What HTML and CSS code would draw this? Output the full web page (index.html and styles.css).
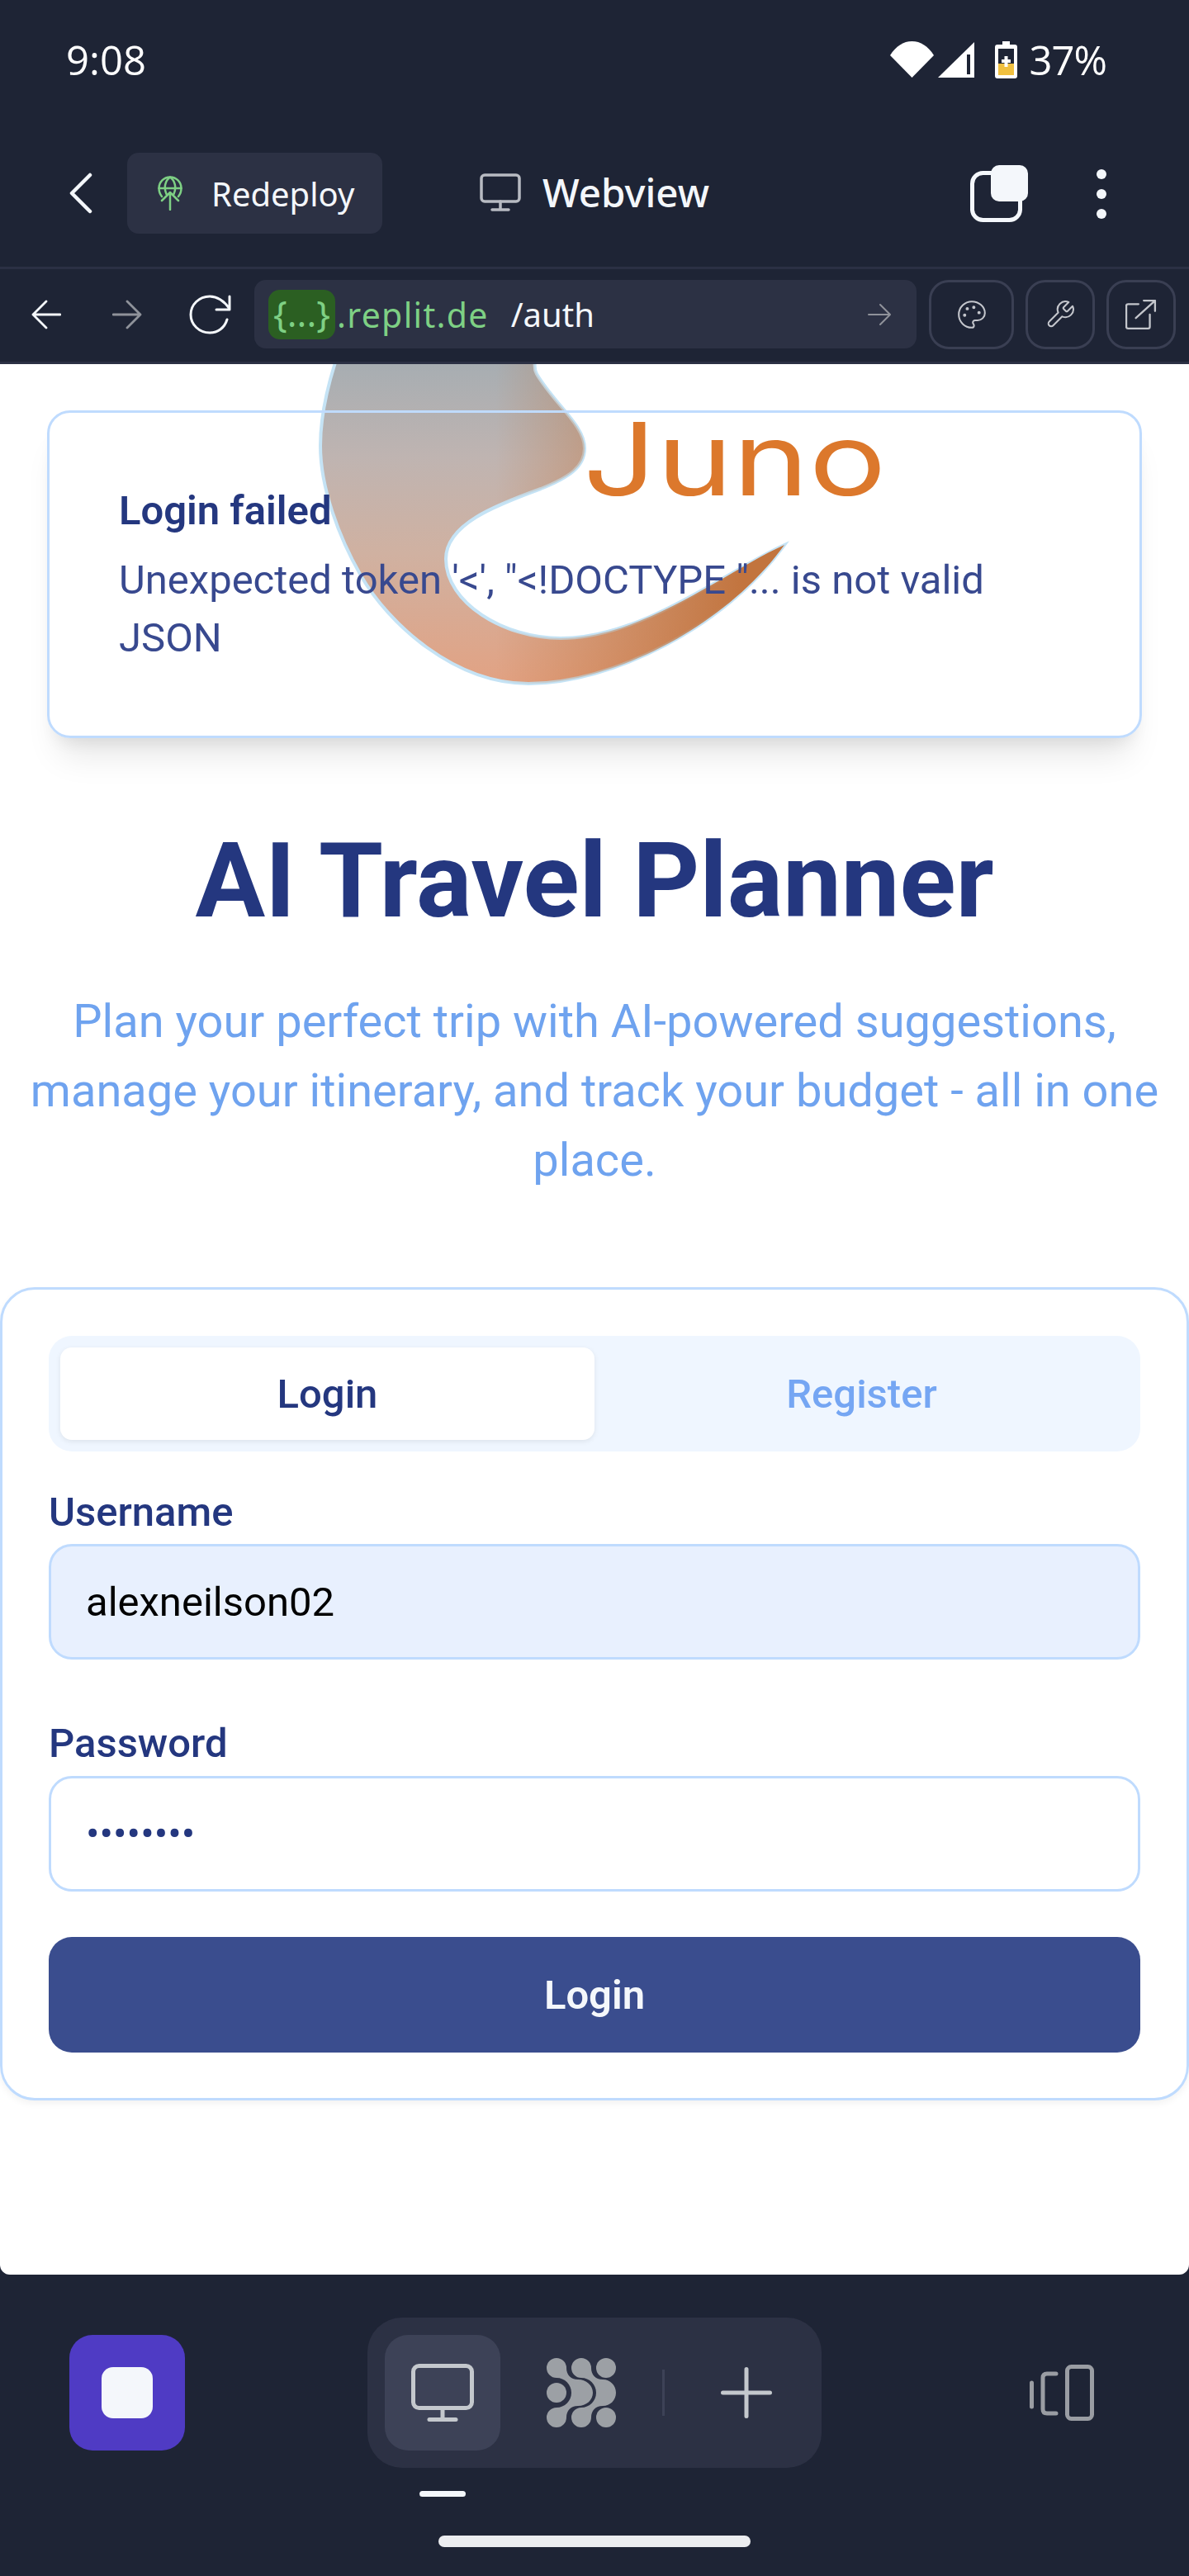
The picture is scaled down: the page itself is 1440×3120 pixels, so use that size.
FILE: index.html
```html
<!DOCTYPE html>
<html lang="en">
<head>
    <meta charset="UTF-8">
    <meta name="viewport" content="width=device-width, initial-scale=1.0">
    <title>AI Travel Planner</title>
    <link rel="stylesheet" href="styles.css">
</head>
<body>
    <!-- Status bar -->
    <div class="status-bar">
        <span class="clock">9:08</span>
        <div class="status-icons">
            <svg class="ic-wifi" viewBox="0 0 53 44"><path d="M0 17C7 6 16 0 26.500 0S46 6 53 17L26.500 44z" fill="#fff"/></svg>
            <svg class="ic-signal" viewBox="0 0 44 43"><path d="M44 0V43H0z" fill="#fff"/><path d="M35 15H39V39H35z" fill="#1e2435"/></svg>
            <svg class="ic-battery" viewBox="0 0 27 45"><path d="M9 0H18V4H24Q27 4 27 7V42Q27 45 24 45H3Q0 45 0 42V7Q0 4 3 4H9z" fill="#fff"/><path d="M4 9H23V27H4z" fill="#1e2435"/><path d="M4 27H23V41H4z" fill="#f0c040"/><path d="M11.500 18H15.500V22H19V26H15.500V31H11.500V26H8V22H11.500z" fill="#fff"/></svg>
            <span class="battery-pct">37%</span>
        </div>
    </div>

    <!-- Replit toolbar -->
    <div class="toolbar">
        <svg class="ic-chevron" viewBox="0 0 28 50"><path d="M25 3L3 25L25 47" fill="none" stroke="#f4f7fb" stroke-width="4.500" stroke-linecap="round" stroke-linejoin="round"/></svg>
        <div class="deploy-chip">
            <svg class="ic-globe" viewBox="0 0 30 42" fill="none" stroke="#7ed084" stroke-width="2.500" stroke-linecap="round" stroke-linejoin="round">
                <path d="M5 25C2.500 22 1.500 18.500 1.500 15C1.500 7.500 7.500 1.500 15 1.500S28.500 7.500 28.500 15C28.500 18.500 27.500 22 25 25"/>
                <path d="M1.500 15H28.500M10.500 22C7 14 9 6 15 1.500C21 6 23 14 19.500 22M15 20V41M5 30L15 20L25 30"/>
            </svg>
            <span>Redeploy</span>
        </div>
        <svg class="ic-monitor" viewBox="0 0 50 46" fill="none" stroke="#b8bbc2" stroke-width="3.500"><rect x="2" y="2" width="46" height="32" rx="4"/><path d="M25 34V44M15 44H35" stroke-linecap="round"/></svg>
        <span class="view-name">Webview</span>
        <svg class="ic-tabs" viewBox="0 0 70 69"><rect x="2.500" y="9.500" width="58" height="57" rx="13" fill="none" stroke="#f4f7fb" stroke-width="5"/><rect x="25" y="0" width="45" height="44" rx="10" fill="#f4f7fb"/></svg>
        <svg class="ic-dots" viewBox="0 0 14 62" fill="#f4f7fb"><circle cx="7" cy="7" r="6"/><circle cx="7" cy="31" r="6"/><circle cx="7" cy="55" r="6"/></svg>
    </div>

    <!-- Address bar -->
    <div class="url-bar">
        <svg class="ic-nav" viewBox="0 0 36 36" fill="none" stroke="#f4f7fb" stroke-width="2.800" stroke-linecap="round" stroke-linejoin="round"><path d="M35 18H2M18 2L2 18L18 34"/></svg>
        <svg class="ic-nav fwd" viewBox="0 0 36 36" fill="none" stroke="#8f929a" stroke-width="2.800" stroke-linecap="round" stroke-linejoin="round"><path d="M1 18H34M18 2L34 18L18 34"/></svg>
        <svg class="ic-reload" viewBox="0 0 52 48" fill="none" stroke="#f4f7fb" stroke-width="3" stroke-linecap="round" stroke-linejoin="round"><path d="M46 30C43 40 35 46 25 46C12 46 2 36 2 24S12 2 25 2C34 2 42 7 49 17M49 2V18H33"/></svg>
        <div class="url-field">
            <span class="repl-chip">{...}</span><span class="domain">.replit.de</span><span class="path">/auth</span>
            <svg class="ic-go" viewBox="0 0 28 28" fill="none" stroke="#8f929a" stroke-width="2" stroke-linecap="round" stroke-linejoin="round"><path d="M1 14H27M15 2L27 14L15 26"/></svg>
        </div>
        <div class="tool-btn wide">
            <svg viewBox="0 0 24 24" fill="none" stroke="#c4c6cc" stroke-width="1.300" stroke-linecap="round" stroke-linejoin="round"><path d="M12 2C6.500 2 2 6.500 2 12s4.500 10 10 10c.926 0 1.648-.746 1.648-1.688 0-.437-.18-.835-.437-1.125-.29-.289-.438-.652-.438-1.125a1.640 1.640 0 0 1 1.668-1.668h1.996c3.051 0 5.555-2.503 5.555-5.554C21.965 6.012 17.461 2 12 2z"/><circle cx="13.500" cy="6.500" r=".6" fill="#c4c6cc"/><circle cx="17.500" cy="10.500" r=".6" fill="#c4c6cc"/><circle cx="8.500" cy="7.500" r=".6" fill="#c4c6cc"/><circle cx="6.500" cy="12.500" r=".6" fill="#c4c6cc"/></svg>
        </div>
        <div class="tool-btn">
            <svg viewBox="0 0 24 24" fill="none" stroke="#c4c6cc" stroke-width="1.300" stroke-linecap="round" stroke-linejoin="round"><path d="M14.700 6.300a1 1 0 0 0 0 1.400l1.600 1.600a1 1 0 0 0 1.400 0l3.770-3.770a6 6 0 0 1-7.940 7.940l-6.910 6.910a2.120 2.120 0 0 1-3-3l6.910-6.910a6 6 0 0 1 7.940-7.940l-3.760 3.760z"/></svg>
        </div>
        <div class="tool-btn">
            <svg viewBox="0 0 36 36" fill="none" stroke="#c4c6cc" stroke-width="2.200" stroke-linecap="round" stroke-linejoin="round"><path d="M15 6H3Q1 6 1 8V32Q1 34 3 34H26Q28 34 28 32V18M12 22L34 2M21 2H34V14"/></svg>
        </div>
    </div>

    <!-- Page inside the webview -->
    <main class="page">
        <svg class="juno-logo" viewBox="380 441 700 400">
            <defs>
                <linearGradient id="swooshBase" x1="0" y1="0" x2="0" y2="1">
                    <stop offset="0" stop-color="#a6adb2"/>
                    <stop offset=".3" stop-color="#bfb4b1"/>
                    <stop offset=".6" stop-color="#d0b1a1"/>
                    <stop offset="1" stop-color="#e2a283"/>
                </linearGradient>
                <linearGradient id="swooshTip" gradientUnits="userSpaceOnUse" x1="600" y1="0" x2="900" y2="0">
                    <stop offset="0" stop-color="#c5763f" stop-opacity="0"/>
                    <stop offset="1" stop-color="#c2743e"/>
                </linearGradient>
                <path id="swoosh" d="M407 436C396 470 388 505 388 540C388 590 410 650 437 697C470 755 550 828 640 828C740 828 878 760 950 660C882 690 780 773 679 773C610 773 540 730 540 677C540 635 600 612 655 592C690 578 708 565 708 543C708 515 672 490 650 453C646 446 648 440 648 436z"/>
            </defs>
            <use href="#swoosh" fill="url(#swooshBase)" stroke="#c5e3f5" stroke-width="4"/>
            <use href="#swoosh" fill="url(#swooshTip)"/>
            <text class="juno-text" transform="translate(706 600) scale(1.28 1)">Juno</text>
        </svg>

        <div class="alert">
            <div class="alert-title">Login failed</div>
            <div class="alert-body">Unexpected token '&lt;', "&lt;!DOCTYPE "... is not valid JSON</div>
        </div>

        <h1 class="title">AI Travel Planner</h1>
        <p class="subtitle">Plan your perfect trip with AI-powered suggestions, manage your itinerary, and track your budget - all in one place.</p>

        <form class="card">
            <div class="tabs">
                <div class="tab active">Login</div>
                <div class="tab">Register</div>
            </div>
            <label class="field-label first">Username</label>
            <input class="field autofilled" type="text" value="alexneilson02">
            <label class="field-label">Password</label>
            <input class="field secret" type="password" value="password">
            <button class="submit" type="button">Login</button>
        </form>
    </main>

    <!-- Bottom bar -->
    <div class="bottom">
        <div class="bottom-row">
            <div class="stop-btn"><div class="stop-square"></div></div>
            <div class="dock">
                <div class="dock-item active">
                    <svg class="ic-dock" viewBox="0 0 76 70" fill="none" stroke="#c4c8cd" stroke-width="5"><rect x="2.500" y="2.500" width="71" height="51" rx="7"/><path d="M38 54V67" stroke-width="5"/><path d="M22 67.500H54" stroke-width="5" stroke-linecap="round"/></svg>
                </div>
                <div class="dock-item next">
                    <svg class="ic-blobs" viewBox="0 0 84 84" fill="#9ca0a5">
                        <circle cx="12" cy="42" r="12"/><circle cx="72" cy="12" r="12"/><circle cx="72" cy="72" r="12"/>
                        <path d="M0 12A12 12 0 0 1 24 12C24 20 29 26 38 26C48 26 56 33 56 42C56 51 48 58 38 58C29 58 24 64 24 72A12 12 0 0 1 0 72A12 12 0 0 1 12 60C22 60 30 52 30 42C30 32 22 24 12 24A12 12 0 0 1 0 12Z"/>
                        <path d="M30 12A12 12 0 0 1 54 12C54 20 59 26 68 26C77 26 84 33 84 42C84 51 77 58 68 58C59 58 54 64 54 72A12 12 0 0 1 30 72A12 12 0 0 1 42 60C52 60 60 52 60 42C60 32 52 24 42 24A12 12 0 0 1 30 12Z"/>
                    </svg>
                </div>
                <div class="dock-sep"></div>
                <svg class="ic-plus" viewBox="0 0 62 62" fill="none" stroke="#c4c8cd" stroke-width="5" stroke-linecap="round"><path d="M2.500 31H59.500M31 2.500V59.500"/></svg>
            </div>
            <svg class="ic-panels" viewBox="0 0 78 68" fill="none" stroke="#9a9da3" stroke-width="5" stroke-linecap="round"><path d="M2.500 22V51M32 11H21Q16 11 16 16V54Q16 59 21 59H32"/><rect x="45.500" y="2.500" width="30" height="63" rx="5"/></svg>
        </div>
        <div class="dock-mark"></div>
        <div class="home-bar"></div>
    </div>
</body>
</html>
```

FILE: styles.css
```css
* {
    box-sizing: border-box;
}
body {
    margin: 0;
    width: 1440px;
    height: 3120px;
    overflow: hidden;
    display: flex;
    flex-direction: column;
    background-color: #1e2435;
    font-family: Roboto, "Liberation Sans", sans-serif;
}
svg {
    display: block;
    flex: none;
}

/* Status bar */
.status-bar {
    height: 144px;
    flex: none;
    display: flex;
    align-items: center;
    justify-content: space-between;
    padding: 0 100px 0 80px;
    color: #fff;
    font-family: "Open Sans", Roboto, sans-serif;
    font-size: 49px;
}
.clock { font-weight: 500; }
.status-icons {
    display: flex;
    align-items: center;
}
.ic-wifi { width: 53px; height: 44px; }
.ic-signal { width: 44px; height: 43px; margin-left: 5px; }
.ic-battery { width: 27px; height: 45px; margin-left: 25px; }
.battery-pct { margin-left: 14px; letter-spacing: -1px; }

/* Toolbar */
.toolbar {
    height: 182px;
    flex: none;
    display: flex;
    align-items: flex-start;
    padding-top: 41px;
    border-bottom: 3px solid #2b3044;
}
.ic-chevron { width: 28px; height: 50px; margin: 24px 0 0 84px; }
.deploy-chip {
    width: 309px;
    height: 98px;
    margin-left: 42px;
    padding-left: 37px;
    display: flex;
    align-items: center;
    background-color: #2c3144;
    border-radius: 14px;
    color: #f4f7fb;
    font-family: "Noto Sans", sans-serif;
    font-size: 40px;
}
.ic-globe { width: 30px; height: 42px; }
.deploy-chip span { margin-left: 35px; }
.ic-monitor { width: 50px; height: 46px; margin: 25px 0 0 118px; }
.view-name {
    margin-left: 26px;
    height: 98px;
    line-height: 96px;
    color: #f4f7fb;
    font-family: "Noto Sans", sans-serif;
    font-size: 47.500px;
    font-weight: 500;
}
.ic-tabs { width: 70px; height: 69px; margin: 15px 0 0 auto; }
.ic-dots { width: 14px; height: 62px; margin: 19px 99px 0 82px; }

/* Address bar */
.url-bar {
    height: 115px;
    flex: none;
    display: flex;
    align-items: center;
    padding-bottom: 3px;
    border-bottom: 3px solid #2b3044;
}
.ic-nav { width: 36px; height: 36px; margin-left: 38px; }
.ic-nav.fwd { margin-left: 62px; }
.ic-reload { width: 52px; height: 48px; margin-left: 57px; }
.url-field {
    width: 802px;
    height: 83px;
    margin-left: 27px;
    padding-left: 17px;
    display: flex;
    align-items: center;
    background-color: #2c3144;
    border-radius: 14px;
    font-family: "Noto Sans", sans-serif;
    font-size: 41px;
}
.repl-chip {
    width: 81px;
    height: 60px;
    line-height: 56px;
    text-align: center;
    background-color: #2b5f22;
    border-radius: 14px;
    color: #7ed084;
    font-size: 44px;
}
.domain { margin-left: 2px; color: #7ed084; letter-spacing: 1.300px; }
.path { margin-left: 27px; color: #f4f7fb; font-size: 40px; }
.ic-go { width: 28px; height: 28px; margin-left: auto; margin-right: 31px; }
.tool-btn {
    width: 84px;
    height: 84px;
    margin-left: 14px;
    display: flex;
    align-items: center;
    justify-content: center;
    border: 3px solid #3a3f53;
    border-radius: 24px;
}
.tool-btn.wide { width: 103px; margin-left: 15px; }
.tool-btn svg { width: 38px; height: 38px; }

/* Page */
.page {
    position: relative;
    flex: 1;
    padding-top: 56px;
    overflow: hidden;
    background-color: #fff;
    border-radius: 0 0 12px 12px;
    color: #24377f;
}
.juno-logo {
    position: absolute;
    left: 380px;
    top: 0;
    width: 700px;
    height: 400px;
}
.juno-text {
    font-family: Inter, sans-serif;
    font-size: 122px;
    fill: #dc782c;
}
.alert {
    position: relative;
    width: 1326px;
    height: 397px;
    margin-left: 57px;
    padding: 84px;
    border: 3px solid #bfdbfe;
    border-radius: 28px;
    box-shadow: 0 35px 40px -15px rgba(0, 0, 0, 0.1), 0 14px 20px -10px rgba(0, 0, 0, 0.08);
}
.alert-title {
    font-size: 49px;
    line-height: 70px;
    font-weight: 600;
}
.alert-body {
    margin-top: 14px;
    font-size: 49px;
    line-height: 70px;
    color: #38498f;
}
.title {
    margin: 103px 0 0;
    text-align: center;
    font-size: 126px;
    line-height: 140px;
    font-weight: 700;
}
.subtitle {
    margin: 58px 30px 0;
    text-align: center;
    font-size: 56px;
    line-height: 84px;
    color: #6fa3ef;
}

/* Form card */
.card {
    width: 1440px;
    margin: 112px 0 0;
    padding: 56px 56px 55px;
    border: 3px solid #bfdbfe;
    border-radius: 42px;
    box-shadow: 0 4px 8px rgba(0, 0, 0, 0.05);
    display: flex;
    flex-direction: column;
}
.tabs {
    height: 140px;
    flex: none;
    padding: 14px;
    display: flex;
    background-color: #eff6ff;
    border-radius: 28px;
}
.tab {
    flex: 1;
    display: flex;
    align-items: center;
    justify-content: center;
    border-radius: 14px;
    color: #75a6f3;
    font-size: 49px;
    font-weight: 500;
}
.tab.active {
    background-color: #fff;
    color: #24377f;
    box-shadow: 0 2px 6px rgba(0, 0, 0, 0.08);
}
.field-label {
    display: block;
    height: 49px;
    line-height: 49px;
    margin: 77px 0 15px;
    font-size: 49px;
    font-weight: 500;
}
.field-label.first {
    margin: 49px 0 14px;
}
.field {
    display: block;
    width: 100%;
    height: 140px;
    flex: none;
    padding: 0 42px;
    border: 3px solid #bfdbfe;
    border-radius: 28px;
    font-family: inherit;
    font-size: 49px;
    color: #24377f;
    background-color: #fff;
    outline: none;
}
.field.autofilled {
    background-color: #e8f0fe;
    color: #000;
}
.submit {
    height: 140px;
    flex: none;
    margin-top: 55px;
    border: none;
    border-radius: 28px;
    background-color: #3a4d8e;
    color: #f4f7fb;
    font-family: inherit;
    font-size: 49px;
    font-weight: 600;
}

/* Bottom bar */
.bottom {
    height: 365px;
    flex: none;
    padding-top: 52px;
}
.bottom-row {
    display: flex;
    align-items: center;
}
.stop-btn {
    width: 140px;
    height: 140px;
    margin-left: 84px;
    display: flex;
    align-items: center;
    justify-content: center;
    background-color: #4f3bc4;
    border-radius: 28px;
}
.stop-square {
    width: 62px;
    height: 62px;
    background-color: #f4f7fb;
    border-radius: 14px;
}
.dock {
    width: 550px;
    height: 182px;
    margin-left: 221px;
    padding-left: 21px;
    display: flex;
    align-items: center;
    background-color: #2c3144;
    border-radius: 42px;
}
.dock-item {
    width: 140px;
    height: 140px;
    display: flex;
    align-items: center;
    justify-content: center;
    border-radius: 28px;
}
.dock-item.active { background-color: #3d4257; }
.dock-item.next { margin-left: 28px; }
.ic-dock { width: 76px; height: 70px; }
.ic-blobs { width: 84px; height: 84px; }
.dock-sep {
    width: 3px;
    height: 56px;
    margin-left: 28px;
    background-color: #3d4257;
}
.ic-plus { width: 62px; height: 62px; margin-left: 68px; }
.ic-panels { width: 78px; height: 68px; margin-left: 252px; }
.dock-mark {
    width: 56px;
    height: 7px;
    margin: 28px 0 0 508px;
    background-color: #f4f7fb;
    border-radius: 4px;
}
.home-bar {
    width: 378px;
    height: 14px;
    margin: 47px 0 0 531px;
    background-color: #ecedf0;
    border-radius: 7px;
}
```
